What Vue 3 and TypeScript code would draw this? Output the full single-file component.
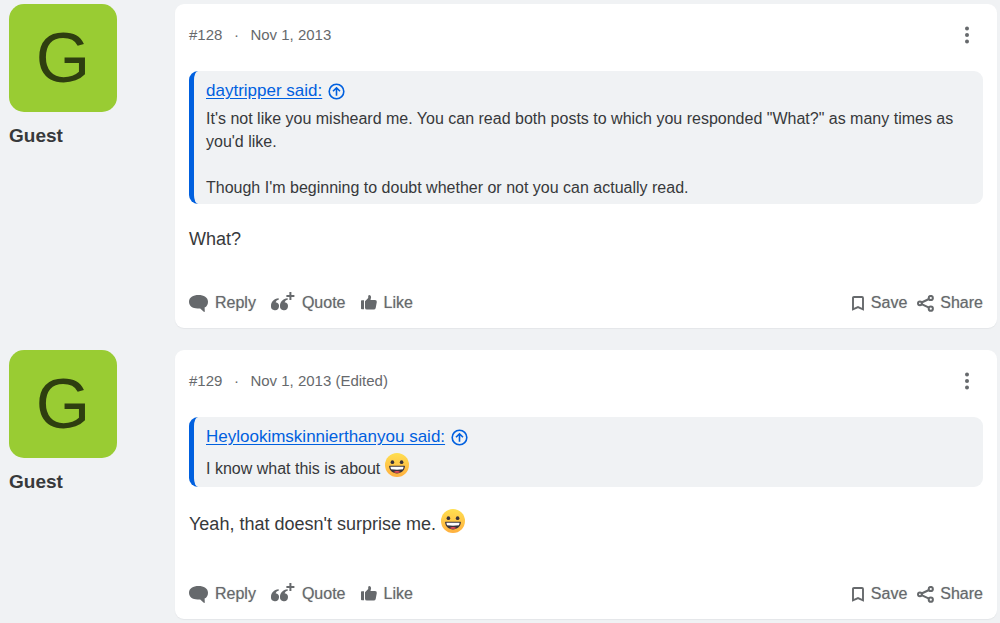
<script setup lang="ts">
import { defineComponent, h } from 'vue'

interface Post {
  id: number
  date: string
  author: string
  quoted: string[]
  quotedSmile: boolean
  body: string
  bodySmile: boolean
}

const posts: Post[] = [
  {
    id: 128,
    date: 'Nov 1, 2013',
    author: 'daytripper',
    quoted: [
      'It\'s not like you misheard me. You can read both posts to which you responded "What?" as many times as you\'d like.',
      "Though I'm beginning to doubt whether or not you can actually read.",
    ],
    quotedSmile: false,
    body: 'What?',
    bodySmile: false,
  },
  {
    id: 129,
    date: 'Nov 1, 2013 (Edited)',
    author: 'Heylookimskinnierthanyou',
    quoted: ['I know what this is about'],
    quotedSmile: true,
    body: "Yeah, that doesn't surprise me.",
    bodySmile: true,
  },
]

const Smile = defineComponent({
  setup: () => () =>
    h('svg', { viewBox: '0 0 24 24', width: 24, height: 24, role: 'img', 'aria-label': 'Big grin' }, [
      h('defs', [
        h('linearGradient', { id: 'face', x1: 0, y1: 0, x2: 0, y2: 1 }, [
          h('stop', { offset: '0', 'stop-color': '#ffdf50' }),
          h('stop', { offset: '1', 'stop-color': '#ffb03f' }),
        ]),
      ]),
      h('circle', { cx: 12, cy: 12, r: 12, fill: 'url(#face)' }),
      h('ellipse', { cx: 7.4, cy: 9.2, rx: 1.8, ry: 1.9, fill: '#39323a' }),
      h('ellipse', { cx: 16.6, cy: 9.2, rx: 1.8, ry: 1.9, fill: '#39323a' }),
      h('path', { d: 'M4.6 12.8H19.4Q20 12.8 19.9 13.6C19.4 18 16.2 20.4 12 20.4S4.6 18 4.1 13.6Q4 12.8 4.6 12.8Z', fill: '#39323a' }),
      h('path', { d: 'M5.4 13.7H18.6L18 16.3Q12 17.1 6 16.3Z', fill: '#fff' }),
      h('path', { d: 'M8.6 19Q12 17 15.4 19Q12 20.7 8.6 19Z', fill: '#ef4b58' }),
    ]),
})
</script>

<template>
  <main class="thread">
    <article v-for="post in posts" :key="post.id" class="post">
      <aside class="member">
        <div class="avatar" aria-hidden="true">G</div>
        <div class="name">Guest</div>
      </aside>
      <section class="card">
        <header class="meta">
          <span>#{{ post.id }}</span>
          <span class="dot">·</span>
          <time>{{ post.date }}</time>
          <button type="button" class="more" aria-label="More options">
            <svg width="6" height="18" viewBox="0 0 6 18" fill="currentColor">
              <circle cx="3" cy="2.5" r="2" />
              <circle cx="3" cy="9" r="2" />
              <circle cx="3" cy="15.5" r="2" />
            </svg>
          </button>
        </header>

        <blockquote class="quote">
          <a href="#" class="source">
            <span class="said">{{ post.author }} said:</span>
            <svg width="17" height="17" viewBox="0 0 17 17" fill="none" stroke="currentColor" stroke-width="1.6">
              <circle cx="8.5" cy="8.5" r="7.3" />
              <path d="M8.5 12.7V5M5 8.3L8.5 4.8L12 8.3" />
            </svg>
          </a>
          <p v-for="line in post.quoted" :key="line">
            {{ line }} <Smile v-if="post.quotedSmile" class="smile" />
          </p>
        </blockquote>

        <div class="body">
          {{ post.body }} <Smile v-if="post.bodySmile" class="smile" />
        </div>

        <footer class="actions">
          <button type="button">
            <svg width="19" height="17" viewBox="0 0 19 17" fill="currentColor">
              <path d="M9.5 0C14.8 0 19 2.3 19 6.7C19 9.4 17.8 11.6 15.6 12.6L15.8 16.4Q15.5 17.2 14.8 16.7L11.2 13.4H8.5C3.5 13.4 0 10.8 0 6.7C0 2.3 4.2 0 9.5 0Z" />
            </svg>
            Reply
          </button>
          <button type="button">
            <svg width="24" height="22" viewBox="0 0 24 22" fill="currentColor">
              <path d="M7.6 6.2L7.9 7.5Q5.2 8.2 4.6 10.2A4 4 0 1 1 0 13.8C0 9.5 3 6.7 7.6 6.2Z" />
              <path d="M16.6 6.2L16.9 7.5Q14.2 8.2 13.6 10.2A4 4 0 1 1 9 13.8C9 9.5 12 6.7 16.6 6.2Z" />
              <path d="M18.4 0H20.4V3H23.4V5H20.4V8H18.4V5H15.4V3H18.4Z" />
            </svg>
            Quote
          </button>
          <button type="button">
            <svg width="16" height="17" viewBox="0 0 16 17" fill="currentColor">
              <path d="M0 6Q0 5.2 .8 5.2H3V14.2H.8Q0 14.2 0 13.4Z" />
              <path d="M4 6.2L7.2 2.9V1.2Q7.3 0 8.5 0Q10.1 .4 10.1 2.3L9.5 5.1H14Q16 5.2 15.8 7L14.7 13Q14.3 14.6 12.7 14.6H6Q4 14.5 4 12.7Z" />
            </svg>
            Like
          </button>
          <button type="button" class="save">
            <svg width="12" height="15" viewBox="0 0 12 15" fill="none" stroke="currentColor" stroke-width="1.9">
              <path d="M1 2Q1 1 2 1H10Q11 1 11 2V13.3L6 11.1L1 13.3Z" />
            </svg>
            Save
          </button>
          <button type="button" class="share">
            <svg width="17" height="17" viewBox="0 0 17 17" fill="none" stroke="currentColor" stroke-width="2">
              <circle cx="2.9" cy="8.3" r="1.9" />
              <circle cx="13.8" cy="3" r="2.1" />
              <circle cx="13.8" cy="13.7" r="2.1" />
              <path d="M4.6 7.5L12 4M4.6 9.1L12 12.7" />
            </svg>
            Share
          </button>
        </footer>
      </section>
    </article>
  </main>
</template>

<style>
body {
  margin: 0;
  background: #f0f2f4;
}
</style>

<style scoped>
.thread {
  display: flex;
  flex-direction: column;
  gap: 22px;
  padding: 4px 3px 3px 9px;
  font-family: "Liberation Sans", Arial, sans-serif;
  color: #37393b;
}
.post {
  display: grid;
  grid-template-columns: 108px minmax(0, 1fr);
  column-gap: 58px;
}
.avatar {
  display: grid;
  place-items: center;
  height: 108px;
  border-radius: 15px;
  background: #9c3;
  color: #2e3e10;
  font-size: 70px;
  line-height: 72px;
}
.name {
  margin-top: 12px;
  font-size: 19px;
  font-weight: 700;
  line-height: 24px;
}
.card {
  padding: 20px 14px 13px;
  border-radius: 9px;
  background: #fff;
  box-shadow: 0 1px 1px #e4e6e9;
}
.meta {
  display: flex;
  align-items: center;
  height: 22px;
  margin-bottom: 25px;
  font-size: 15px;
  line-height: 20px;
  color: #66696c;
}
.dot {
  width: 28px;
  text-align: center;
}
button {
  display: flex;
  align-items: center;
  padding: 0;
  border: 0;
  background: none;
  color: #66696c;
  font: inherit;
  cursor: pointer;
}
.more {
  margin-left: auto;
  padding: 0 13px;
}
svg {
  flex: none;
}
.quote {
  margin: 0 0 22px;
  padding: 8px 16px 5px 12px;
  border-left: 5px solid #0060df;
  border-radius: 9px;
  background: #f0f2f4;
  font-size: 16px;
  line-height: 23px;
}
.source {
  display: flex;
  align-items: center;
  gap: 6px;
  margin-bottom: 4px;
  color: #0060df;
  font-size: 17px;
  line-height: 24px;
  text-decoration: none;
}
.said {
  text-decoration: underline;
  text-underline-offset: 2px;
}
p {
  margin: 0;
}
p + p {
  margin-top: 23px;
}
.smile {
  display: inline-block;
  margin-bottom: 5px;
  vertical-align: -8px;
}
.body {
  margin-bottom: 38px;
  font-size: 18px;
  line-height: 27px;
}
.body .smile {
  margin-bottom: 11px;
  vertical-align: -14px;
}
.actions {
  display: flex;
  align-items: center;
  gap: 15px;
  font-size: 16px;
  line-height: 24px;
}
.actions button {
  gap: 7px;
  text-shadow: 0 0 1px #66696c80;
}
.actions .save {
  margin-left: auto;
}
.actions .share {
  margin-left: -5px;
  gap: 6px;
}
</style>
